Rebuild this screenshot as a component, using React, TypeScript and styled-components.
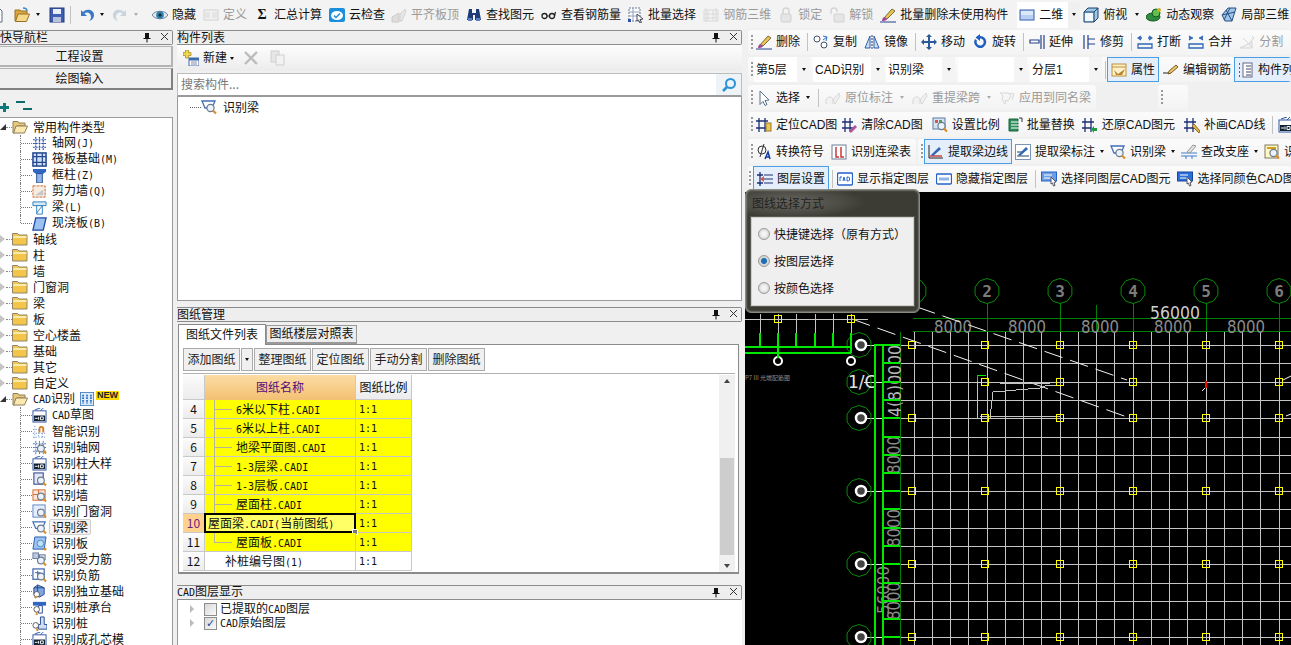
import React from 'react';
import styled, { createGlobalStyle, css } from 'styled-components';

const UI = '"Liberation Sans","Noto Sans CJK SC",sans-serif';
const CJK = '"Noto Sans CJK SC","Liberation Sans",sans-serif';

const Global = createGlobalStyle`
  html, body { margin: 0; padding: 0; background: #f0f0f0; overflow: hidden; }
  body { font: 12px/16px ${UI}; color: #111; }
`;

/* ---------- icons ---------- */
const Mag = () => (
  <>
    <circle cx="9.5" cy="9" r="3.6" fill="#eaf2fb" stroke="#6a7a8c" strokeWidth="1.2" />
    <path d="M12 11.5l3 3" stroke="#d98e2b" strokeWidth="2.2" />
  </>
);
const CadBadge = () => (
  <>
    <rect x="1" y="3" width="14" height="12" fill="#fff" stroke="#2f55a4" />
    <path d="M3 2l6-2M9 3l3-3" stroke="#2f55a4" />
    <rect x="2" y="8" width="12" height="6" fill="#123" />
    <path d="M3 11h3M7 9.5v3M9 9.5h3v3H9z" stroke="#fff" fill="none" />
  </>
);
const icons: Record<string, React.ReactNode> = {
  doc: <path d="M3 1h8l3 3v11H3z" fill="#fff" stroke="#5a6a80" />,
  open: (
    <>
      <path d="M1 3h5l1 1h6v4H5l-2 6H1z" fill="#d9a73f" stroke="#96702a" />
      <path d="M4 7h11.5l-3 7.5H1.5z" fill="#f6d988" stroke="#96702a" />
      <path d="M9 1c3 0 4 1 4 3" stroke="#3a8ac8" fill="none" strokeWidth="1.4" />
    </>
  ),
  folder: (
    <>
      <path d="M.5 2.5h5l1.500 1.500h8v10H.5z" fill="#f3c64b" stroke="#8e8468" />
      <path d="M1.500 5h13v2h-13z" fill="#fbeaa9" />
    </>
  ),
  folderOpen: (
    <>
      <path d="M1 2.500h5l1 1.500h6v3H5l-2 7H1z" fill="#e9c878" stroke="#8e7f5c" />
      <path d="M4 7h11.500l-3 7H1.500z" fill="#fbe8b0" stroke="#8e7f5c" />
    </>
  ),
  save: (
    <>
      <rect x="1" y="1" width="14" height="14" fill="#3f5fb5" stroke="#24397a" />
      <rect x="4" y="2" width="8" height="5" fill="#e8eefb" />
      <rect x="4" y="10" width="8" height="5" fill="#b7c3dd" />
    </>
  ),
  undo: <path d="M2 3v6h6L5.500 6.500C8 4.500 12 6 12 10c0 2-1 3-2 4 4-1 5-4 5-6C15 3 8 1 4 5z" fill="#3b78c8" />,
  redo: <path d="M14 3v6H8l2.500-2.500C8 4.500 4 6 4 10c0 2 1 3 2 4-4-1-5-4-5-6C1 3 8 1 12 5z" fill="#c8d4dc" />,
  eye: (
    <>
      <path d="M0 8c3-5 13-5 16 0-3 5-13 5-16 0z" fill="#dfe8f1" stroke="#6f8398" />
      <circle cx="8" cy="8" r="3.800" fill="#2f7ea8" />
      <circle cx="8" cy="8" r="1.600" fill="#0d2b3d" />
    </>
  ),
  define: (
    <>
      <rect x="1" y="3" width="14" height="10" fill="#f2f2f2" stroke="#bbb" />
      <path d="M2 6h5M2 8h5M2 10h5M9 6h5M9 8h5M9 10h5" stroke="#c4c4c4" />
    </>
  ),
  cloud: (
    <>
      <rect x="0" y="1" width="16" height="14" rx="2" fill="#1b8fdc" />
      <ellipse cx="8" cy="8.500" rx="6" ry="4.500" fill="#fff" />
      <path d="M5 8.500l2 2 4-4" stroke="#1b8fdc" strokeWidth="1.500" fill="none" />
    </>
  ),
  flush: (
    <>
      <path d="M1 10l7-4v9H1z" fill="#cfcfcf" stroke="#b0b0b0" />
      <path d="M9 14V7l5-5 1 2-4 10z" fill="#dedede" stroke="#bcbcbc" />
    </>
  ),
  binoc: (
    <>
      <path d="M3 2h3v4h4V2h3l2 11h-6V8H7v5H1z" fill="#1f3a78" />
      <rect x="2" y="11" width="4" height="3" fill="#5d7ec0" />
      <rect x="10" y="11" width="4" height="3" fill="#5d7ec0" />
    </>
  ),
  glasses: (
    <>
      <circle cx="3.500" cy="9" r="2.500" fill="none" stroke="#222" strokeWidth="1.300" />
      <circle cx="11" cy="9" r="2.500" fill="none" stroke="#222" strokeWidth="1.300" />
      <path d="M6 9h2.500M13.500 9l1-4" stroke="#222" strokeWidth="1.200" />
    </>
  ),
  batch: (
    <>
      <path d="M1 1h11v13H1z" fill="#fff" stroke="#6a7a96" strokeDasharray="2 1" />
      <path d="M1 5h11M1 9h11M5 1v13" stroke="#8fa2bf" />
      <rect x="0" y="12" width="3" height="3" fill="#2b4fb0" />
      <path d="M9 7l6 5-3 .500 1.500 3-1.500.500-1.500-3L9 14z" fill="#fff" stroke="#445" />
    </>
  ),
  rebar3d: <path d="M1 3h14v11H1zM5 3v11M10 3v11M1 7h14M1 11h14M3 1v14M13 1v14" fill="none" stroke="#c4c8cc" />,
  lock: (
    <>
      <path d="M5 7V4a3 3 0 0 1 6 0v3" fill="none" stroke="#c0c0c0" strokeWidth="1.500" />
      <rect x="3" y="7" width="10" height="8" rx="1" fill="#dcdcdc" stroke="#bbb" />
    </>
  ),
  unlock: (
    <>
      <path d="M2 7V4a3 3 0 0 1 6 0v1" fill="none" stroke="#c0c0c0" strokeWidth="1.500" />
      <rect x="5" y="7" width="10" height="8" rx="1" fill="#dcdcdc" stroke="#bbb" />
    </>
  ),
  brush: (
    <>
      <path d="M4 11l8-9 3 2-8 8z" fill="#e9c34f" stroke="#7a6c3a" />
      <path d="M2 14c0-2 1-4 3-4l2 2c-1 2-3 2-5 2z" fill="#a04a9a" />
      <path d="M0 15h16" stroke="#27408b" />
    </>
  ),
  copy: (
    <>
      <circle cx="4" cy="5" r="3" fill="#fff" stroke="#3f5168" />
      <circle cx="11" cy="11" r="3" fill="#fff" stroke="#3f5168" />
      <path d="M10 2l4 1-1 4M14 3l-4 3" stroke="#2f6ec2" fill="none" />
    </>
  ),
  mirror: (
    <>
      <path d="M1 14L6 2v12z" fill="#cfe0f6" stroke="#2a5fb0" />
      <path d="M15 14L10 2v12z" fill="#cfe0f6" stroke="#2a5fb0" />
      <path d="M8 1v14" stroke="#334" strokeDasharray="2 1" />
    </>
  ),
  move: <path d="M8 0l3 3H9v4h4V5l3 3-3 3V9H9v4h2l-3 3-3-3h2V9H3v2L0 8l3-3v2h4V3H5z" fill="#2a5a98" />,
  rotate: <path d="M8 2a6 6 0 1 1-5 3l2 1.500A3.500 3.500 0 1 0 8 4.500V7L3.500 3.500 8 0z" fill="#1f5fc4" />,
  extend: <path d="M1 6h9v3H1zM12 1v14M15 1v14" fill="#fff" stroke="#24408a" strokeWidth="1.200" />,
  trim: <path d="M4 1v14M8 1v14M8 5h7M8 10h7" fill="none" stroke="#24408a" strokeWidth="1.200" />,
  breakp: <path d="M1 10h14v4H1zM4 2l-3 2 3 2M12 2l3 2-3 2M1 4h4M11 4h4" fill="none" stroke="#2f68b8" strokeWidth="1.300" />,
  merge: <path d="M1 10h14v4H1zM1 2l3 2-3 2M15 2l-3 2 3 2M1 4h4M11 4h4" fill="none" stroke="#2f68b8" strokeWidth="1.300" />,
  split: <path d="M1 14h12V8L1 14zM4 4l9 9M13 2l2 2-5 6" fill="#eee" stroke="#c0c0c0" />,
  attr: (
    <>
      <rect x="1" y="2" width="14" height="12" fill="#fff1c9" stroke="#c18f36" />
      <path d="M1 5h14" stroke="#c18f36" />
      <path d="M3 8l4 4 7-5-3 6H5z" fill="#b5852d" />
    </>
  ),
  pencil: (
    <>
      <path d="M0 11h8" stroke="#222" />
      <path d="M6 9l7-6 2 2-7 6-3 1z" fill="#e8c566" stroke="#7a5b22" />
    </>
  ),
  list: (
    <>
      <path d="M1 2h2M1 6h2M1 10h2M1 14h2" stroke="#333" strokeWidth="1.600" strokeDasharray="1 1" />
      <rect x="5" y="1" width="9" height="14" fill="#fff" stroke="#668" />
      <path d="M8 4h5M8 7h5M8 10h5M8 13h5" stroke="#446" />
    </>
  ),
  listBlue: (
    <>
      <rect x=".5" y=".5" width="15" height="15" fill="#dcebfa" stroke="#4a7fc0" />
      <path d="M3.500 3v10M8 3v10M12.500 3v10" stroke="#2c6cc4" strokeWidth="2" strokeDasharray="2 1" />
    </>
  ),
  cursor: <path d="M4 1l9 9-4 .500 2 4-2 1-2-4-3 3z" fill="#fff" stroke="#5b6f8a" />,
  span: <path d="M1 14v-4c0-2 2-3 4-3s3 1 3 3v4M8 10l6-7 1 3-5 8z" fill="#eee" stroke="#c2c2c2" />,
  apply: <path d="M1 3h8l3 3-3 5-2-1-1 4-3-5 1-3zM10 3l5 1-2 6" fill="#f4f4f4" stroke="#c2c2c2" />,
  locate: (
    <>
      <path d="M3 1v14M9 1v14M0 4h12M0 11h12" stroke="#1d2f73" strokeWidth="1.300" />
      <rect x="10" y="6" width="5" height="8" fill="#e9c55a" stroke="#9a7a26" />
    </>
  ),
  clearCad: (
    <>
      <path d="M4 1v14M9 1v14M1 5h11M1 11h11" stroke="#1d2f73" strokeWidth="1.300" />
      <path d="M8 14l6-6 2 2-6 6z" fill="#b0559c" />
    </>
  ),
  scale: (
    <>
      <rect x="1" y="1" width="12" height="11" fill="#d6e3f3" stroke="#5a7ba5" />
      <path d="M3 3h3v3H3z" fill="#d9534f" />
      <path d="M7 3h3v3H7z" fill="#55a24f" />
      <Mag />
    </>
  ),
  replace: (
    <>
      <path d="M2 2h9v12H2z" fill="#2f8f5a" stroke="#186239" />
      <path d="M4 5h8M4 8h8M4 11h8" stroke="#fff" />
      <path d="M12 1h3v4" fill="none" stroke="#333" />
    </>
  ),
  restore: (
    <>
      <path d="M3 1v14M9 1v14M0 5h12M0 11h9" stroke="#1d2f73" strokeWidth="1.300" />
      <path d="M9 12l3-3v2h3v3h-3v2z" fill="#1e9a3f" />
    </>
  ),
  patch: (
    <>
      <path d="M3 1v14M9 1v14M0 5h12M0 11h10" stroke="#1d2f73" strokeWidth="1.300" />
      <path d="M8 9l2-2 6 7-1 2z" fill="#e7b24b" stroke="#8b6a25" />
    </>
  ),
  phiA: (
    <>
      <circle cx="6" cy="6" r="4" fill="none" stroke="#333" />
      <path d="M8 0L4 13" stroke="#333" />
      <path d="M9 15l3-7 2 7M10 13h3.500" fill="none" stroke="#123a9a" strokeWidth="1.500" />
    </>
  ),
  liang: (
    <>
      <rect x="1" y="1" width="14" height="14" fill="#fff" stroke="#6f7f9a" />
      <path d="M5 3v10h3M10 3v10h3" stroke="#c8373a" strokeWidth="1.500" fill="none" />
    </>
  ),
  edgeLine: (
    <>
      <path d="M1 1v13h14" fill="none" stroke="#222" />
      <path d="M2 12h12" stroke="#c44" strokeWidth="1.400" />
      <path d="M3 11l8-8 2 2-8 7z" fill="#3265b8" />
    </>
  ),
  markLine: (
    <>
      <rect x=".5" y=".5" width="15" height="15" fill="#fff" stroke="#7b93b5" />
      <path d="M2 12h12M2 8h6" stroke="#246" />
      <path d="M3 11l8-8 2 2-8 7z" fill="#3265b8" />
    </>
  ),
  findBeam: (
    <>
      <path d="M1 2h13l-3 7H4z" fill="#fff" stroke="#3f6fb8" strokeWidth="1.300" />
      <Mag />
    </>
  ),
  support: (
    <>
      <path d="M0 9h16M0 12h16" stroke="#3d7fd0" />
      <path d="M5 15v-3M11 15v-3" stroke="#3d7fd0" />
      <path d="M6 8l6-7 3 1-6 7z" fill="#e2e2e2" stroke="#999" />
    </>
  ),
  report: (
    <>
      <rect x="1" y="1" width="13" height="13" fill="#fff6c8" stroke="#7e7a5a" />
      <path d="M3 4h9" stroke="#d2a21f" strokeWidth="2" />
      <Mag />
    </>
  ),
  layers: (
    <>
      <path d="M3 1v14M0 4h6M0 12h6" stroke="#1d2f73" strokeWidth="1.300" />
      <path d="M7 4h9M7 8h9M7 12h9" stroke="#1d2f73" />
      <path d="M3 8l4-3v6z" fill="#d9534f" />
    </>
  ),
  cadShow: (
    <>
      <rect x=".5" y="2" width="15" height="12" rx="1" fill="#fff" stroke="#2562c9" strokeWidth="1.300" />
      <path d="M3 10V6h2M6 10l1-4 1 4M10 6v4h1.500l1-1V7l-1-1z" stroke="#2562c9" fill="none" />
    </>
  ),
  cadHide: (
    <>
      <rect x=".5" y="3" width="15" height="10" rx="1" fill="#fff" stroke="#2562c9" strokeWidth="1.300" />
      <path d="M3 6.500h10v3H3z" fill="#8fb4e8" />
    </>
  ),
  cadPick: (
    <>
      <rect x=".5" y="1" width="15" height="9" fill="#6f9fe2" stroke="#2562c9" />
      <path d="M3 4h8M3 7h8" stroke="#fff" />
      <path d="M10 6l5 5-2 .500 1 3-1.500.500-1-3-1.500 1z" fill="#fff" stroke="#556" />
    </>
  ),
  cadPick2: (
    <>
      <rect x=".5" y="1" width="15" height="9" fill="#2d6fd8" stroke="#18479b" />
      <path d="M3 4h8M3 7h8" stroke="#fff" />
      <path d="M10 6l5 5-2 .500 1 3-1.500.500-1-3-1.500 1z" fill="#fff" stroke="#556" />
    </>
  ),
  view2d: (
    <>
      <rect x="1" y="3" width="14" height="10" fill="#b8cff2" stroke="#355fb0" />
      <path d="M2 4h12v4H2z" fill="#dbe7fa" />
    </>
  ),
  topview: (
    <>
      <path d="M1 5l4-4h10v10l-4 4H1z" fill="#9bc8e4" stroke="#1f3f6a" />
      <path d="M1 5h10v10M11 5l4-4" fill="none" stroke="#1f3f6a" />
      <path d="M2 6h8v8H2z" fill="#f2f7fb" />
    </>
  ),
  orbit: (
    <>
      <ellipse cx="7" cy="10" rx="7" ry="4" fill="#2b8d3d" stroke="#14561f" />
      <circle cx="10" cy="6" r="4" fill="#5fbf4c" stroke="#14561f" />
      <circle cx="13" cy="3" r="2" fill="#c6b52a" />
    </>
  ),
  local3d: (
    <>
      <path d="M1 8l6-7h8l-4 13H4z" fill="#9fc4ea" stroke="#294f82" />
      <path d="M5 3l6 11M9 1l-6 12M1 8l13-3" stroke="#294f82" />
    </>
  ),
  plusNew: (
    <>
      <rect x="6" y="8" width="10" height="8" fill="#fff" stroke="#3d6bb0" />
      <rect x="6" y="8" width="10" height="2.500" fill="#3d6bb0" />
      <path d="M8 12h6M8 14h6" stroke="#88a" />
      <path d="M2.500 0h3v2.500H8v3H5.500V8h-3V5.500H0v-3h2.500z" fill="#f1d54a" stroke="#9b8422" strokeWidth=".7" />
    </>
  ),
  xGray: <path d="M2 2l12 12M14 2L2 14" stroke="#bcbcbc" strokeWidth="2.400" />,
  paste: (
    <>
      <rect x="1" y="1" width="8" height="11" fill="#e6e6e6" stroke="#cfcfcf" />
      <rect x="6" y="5" width="8" height="10" fill="#f2f2f2" stroke="#cfcfcf" />
    </>
  ),
  search: (
    <>
      <circle cx="9.500" cy="6.500" r="4.500" fill="none" stroke="#2a94d8" strokeWidth="2" />
      <path d="M6 10l-4 4" stroke="#2a94d8" strokeWidth="2.600" />
    </>
  ),
  axisNet: <path d="M1 4h14M1 8h14M1 12h14M4 1v14M8 1v14M12 1v14" stroke="#2b4fa8" strokeDasharray="2 1" fill="none" strokeWidth="1.300" />,
  raft: (
    <>
      <rect x="1" y="1" width="14" height="14" fill="#cfe0f6" stroke="#24478e" strokeWidth="1.600" />
      <path d="M1 5h14M1 11h14M5 1v14M11 1v14" stroke="#24478e" strokeWidth="1.300" />
    </>
  ),
  column: (
    <>
      <path d="M1 1h14v3l-3 2H4L1 4z" fill="#2f66c4" />
      <rect x="5" y="6" width="6" height="10" fill="#8fb5ec" stroke="#24478e" />
    </>
  ),
  wall: (
    <>
      <rect x="1" y="2" width="13" height="12" fill="#f6ece2" stroke="#c86a30" strokeDasharray="3 1" />
      <path d="M3 12l9-6v6z" fill="#c8c8c8" />
    </>
  ),
  beam: (
    <>
      <path d="M1 2h14v4H1z" fill="#d5ecf7" stroke="#2b7dbd" />
      <path d="M5 6h6v9H5z" fill="#fff" stroke="#2b7dbd" />
      <path d="M5 14l6-8" stroke="#2b7dbd" />
    </>
  ),
  slab: <path d="M4 2h11l-3 13H1z" fill="#9cc0f0" stroke="#1d4aa8" strokeWidth="1.400" />,
  cad: <CadBadge />,
  smart: (
    <>
      <path d="M1 6h8M1 10h14M1 14h14M3 2v13M7 6v9M11 10v5" stroke="#4a7cc2" strokeDasharray="1 2" />
      <path d="M7 9V5a3 3 0 0 1 6 0v4h-2V5a1 1 0 0 0-2 0v4z" fill="#d97820" />
    </>
  ),
  axisFind: (
    <>
      <path d="M1 4h14M1 8h14M1 12h14M4 1v14M8 1v14M12 1v14" stroke="#4a6fb0" strokeDasharray="2 1" />
      <Mag />
    </>
  ),
  colFind: (
    <>
      <rect x="2" y="1" width="10" height="12" fill="#e4e8f4" stroke="#4a5ea0" strokeWidth="1.300" />
      <Mag />
    </>
  ),
  wallFind: (
    <>
      <rect x="1" y="2" width="13" height="11" fill="#fbe6d6" stroke="#d06a30" />
      <path d="M1 7h13M7 2v11" stroke="#d06a30" />
      <Mag />
    </>
  ),
  doorFind: (
    <>
      <rect x="1" y="1" width="13" height="13" fill="#e6eefb" stroke="#5a84c4" />
      <Mag />
    </>
  ),
  slabFind: (
    <>
      <path d="M3 1h12l-2 13H1z" fill="#9cc0f0" stroke="#2460b0" />
      <circle cx="9" cy="8" r="3.500" fill="#bfe0f4" stroke="#4a8fc8" />
      <circle cx="14" cy="14" r="1.500" fill="#d98e2b" />
    </>
  ),
  rebarFind: (
    <>
      <rect x="1" y="1" width="6" height="6" fill="#bccbe3" stroke="#64779c" />
      <rect x="8" y="3" width="6" height="5" fill="#d9e1ee" stroke="#64779c" />
      <Mag />
    </>
  ),
  negFind: (
    <>
      <rect x="1" y="1" width="12" height="11" fill="#fff" stroke="#3f64ad" strokeWidth="1.300" />
      <path d="M3 5h6M6 3v6" stroke="#3f64ad" />
      <Mag />
    </>
  ),
  footFind: (
    <>
      <path d="M6 1l7 3v7l-5 3-6-3V4z" fill="#7fa6e0" stroke="#24478e" />
      <path d="M6 1v13M2 4l11 0" stroke="#24478e" />
      <circle cx="5" cy="11" r="3" fill="#fff" stroke="#556" />
      <path d="M3 15l2-2" stroke="#d98e2b" strokeWidth="2" />
    </>
  ),
  capFind: (
    <>
      <path d="M1 2h14v4H1z" fill="#2f66c4" />
      <path d="M7 6h4v8H7z" fill="#fff" stroke="#24478e" />
      <circle cx="5" cy="10" r="3" fill="#fff" stroke="#556" />
      <path d="M5 13v3" stroke="#d98e2b" strokeWidth="2" />
    </>
  ),
  pileFind: (
    <>
      <path d="M9 1h4v8h3v5H7V9h2z" fill="#cfe0f6" stroke="#24478e" />
      <circle cx="4" cy="10" r="3" fill="#fff" stroke="#556" />
      <path d="M5 13l1 3" stroke="#d98e2b" strokeWidth="2" />
    </>
  ),
};

const Svg = styled.svg<{ $off?: boolean; $w: number }>`
  flex: none;
  width: ${p => p.$w}px;
  height: ${p => p.$w}px;
  ${p => p.$off && css`filter: grayscale(1) opacity(0.6);`}
`;
const Icon = ({ n, off, size = 16 }: { n: string; off?: boolean; size?: number }) => (
  <Svg viewBox="0 0 16 16" $w={size} $off={off}>{icons[n]}</Svg>
);

/* ---------- mixed text: Latin runs are half-width, as in a bitmap song face ---------- */
const Latin = styled.span`
  font-family: "DejaVu Sans Mono", monospace;
  font-size: 10px;
`;
const mix = (t: string) => (
  <span>{t.split(/([\x21-\x7e]+)/).map((s, i) => (i % 2 ? <Latin key={i}>{s}</Latin> : s))}</span>
);

/* ---------- page ---------- */
const Shell = styled.div`
  width: 1291px;
  height: 645px;
  display: flex;
  flex-direction: column;
  overflow: hidden;
  position: relative;
`;
const TopBar = styled.div`
  flex: none;
  height: 29px;
  display: flex;
  align-items: center;
  white-space: nowrap;
  overflow: hidden;
  background: #f3f3f3;
`;
const Tool = styled.span<{ $ml?: number; $off?: boolean }>`
  flex: none;
  display: inline-flex;
  align-items: center;
  gap: 4px;
  margin-left: ${p => p.$ml ?? 7}px;
  color: ${p => (p.$off ? '#9a9a9a' : '#111')};
  font-family: ${UI};
  font-size: 12px;
  line-height: 16px;
  white-space: nowrap;
`;
const HiTool = styled(Tool)`
  height: 23px;
  padding: 0 3px;
  border: 1px solid #4a9ee6;
  background: #e4effb;
`;
const Caret = styled.i<{ $ml?: number; $off?: boolean }>`
  flex: none;
  width: 0;
  height: 0;
  margin-left: ${p => p.$ml ?? 5}px;
  border: 2.5px solid transparent;
  border-top: 3px solid ${p => (p.$off ? '#aaa' : '#111')};
  border-bottom: 0;
`;
const Sep = styled.i<{ $ml?: number; $mr?: number }>`
  flex: none;
  width: 1px;
  height: 18px;
  background: #c2c2c2;
  margin: 0 ${p => p.$mr ?? -2}px 0 ${p => p.$ml ?? 7}px;
`;
const Sigma = styled.b`
  flex: none;
  width: 16px;
  text-align: center;
  font: bold 14px/16px "Liberation Serif", serif;
`;
const ViewChip = styled.span`
  flex: none;
  display: inline-flex;
  align-items: center;
  height: 26px;
  width: 62px;
  margin-left: 9px;
  padding-left: 1px;
  box-sizing: border-box;
  background: #fff;
`;
const CaretBox = styled.span`
  flex: none;
  align-self: stretch;
  width: 12px;
  margin-left: 5px;
  background: #f0f0f0;
  display: flex;
  align-items: center;
  justify-content: center;
`;

const Body = styled.div`
  flex: 1;
  min-height: 0;
  display: flex;
`;

/* panels */
const NavCol = styled.div`
  flex: none;
  width: 173px;
  display: flex;
  flex-direction: column;
  overflow: hidden;
`;
const MidCol = styled.div`
  flex: none;
  width: 565px;
  margin-left: 4px;
  display: flex;
  flex-direction: column;
`;
const RightCol = styled.div`
  flex: none;
  width: 546px;
  margin-left: 3px;
  display: flex;
  flex-direction: column;
  min-height: 0;
`;
const TitleBar = styled.div`
  flex: none;
  height: 13px;
  margin-top: 1px;
  display: flex;
  align-items: center;
  border-top: 1px solid #8c8c8c;
  border-bottom: 1px solid #8c8c8c;
  border-right: 1px solid #8c8c8c;
  border-radius: 0 2px 2px 0;
  background: #eeeeee;
  font: 12px/13px ${CJK};
  overflow: visible;
`;
const TitleText = styled.span`
  flex: 1;
  white-space: nowrap;
  padding-bottom: 2px;
`;
const PinBox = styled.span`
  display: flex;
  width: 30px;
  justify-content: space-between;
  padding: 0 3px 0 0;
  box-sizing: border-box;
`;
const PanelHead = ({ title }: { title: string }) => (
  <TitleBar>
    <TitleText>{mix(title)}</TitleText>
    <PinBox>
      <svg width="10" height="11" viewBox="0 0 10 11">
        <path d="M3 1h4v5h1.500v1H5.500v3.500h-1V7h-3V6H3z" fill="#111" />
      </svg>
      <svg width="9" height="9" viewBox="0 0 9 9">
        <path d="M1 1l7 7M8 1L1 8" stroke="#333" />
      </svg>
    </PinBox>
  </TitleBar>
);

const NavButton = styled.div<{ $raised?: boolean }>`
  flex: none;
  box-sizing: border-box;
  height: ${p => (p.$raised ? 22 : 21)}px;
  margin-top: 1px;
  margin-left: -13px;
  display: flex;
  align-items: center;
  justify-content: center;
  padding-bottom: 1px;
  font: 12px/16px ${CJK};
  background: #f0f0f0;
  border: 1px solid #b4b4b4;
  border-bottom: 2px solid ${p => (p.$raised ? '#808080' : '#b4b4b4')};
  border-right: 2px solid ${p => (p.$raised ? '#808080' : '#b4b4b4')};
`;
const ExpandRow = styled.div`
  flex: none;
  height: 27px;
  display: flex;
  align-items: flex-end;
  gap: 7px;
  padding-bottom: 5px;
  box-sizing: border-box;
`;
const TreeBox = styled.div`
  flex: 1;
  min-height: 0;
  background: #fff;
  border-top: 1px solid #9a9a9a;
  border-right: 1px solid #9a9a9a;
  padding-top: 1px;
  overflow: hidden;
  font: 12px/16px ${CJK};
`;
const GroupRow = styled.div`
  height: 16px;
  display: flex;
  align-items: center;
  position: relative;
  padding-left: 12px;
  gap: 5px;
  white-space: nowrap;
  &::after {
    content: '';
    position: absolute;
    left: 6px;
    top: 8px;
    width: 6px;
    border-top: 1px dotted #888;
  }
`;
const Twist = styled.i<{ $open?: boolean }>`
  position: absolute;
  left: 0;
  top: 4px;
  width: 0;
  height: 0;
  border-style: solid;
  ${p =>
    p.$open
      ? css`
          border-width: 0 0 6px 6px;
          border-color: transparent transparent #333 transparent;
          top: 5px;
        `
      : css`
          border-width: 4px 0 4px 5px;
          border-color: transparent transparent transparent #c4c4c4;
        `}
`;
const ChildRow = styled.div<{ $last?: boolean }>`
  height: 16px;
  display: flex;
  align-items: center;
  position: relative;
  padding-left: 32px;
  gap: 3px;
  white-space: nowrap;
  &::before {
    content: '';
    position: absolute;
    left: 20px;
    top: 0;
    height: ${p => (p.$last ? 8 : 16)}px;
    border-left: 1px dotted #777;
  }
  &::after {
    content: '';
    position: absolute;
    left: 21px;
    top: 8px;
    width: 11px;
    border-top: 1px dotted #777;
  }
`;
const ChildLabel = styled.span<{ $sel?: boolean }>`
  padding: 0 2px;
  ${p =>
    p.$sel &&
    css`
      background: #f3f3f3;
      border: 1px solid #cfcfcf;
      border-radius: 2px;
      margin: 0 -1px;
      line-height: 14px;
    `}
`;
const NewBadge = styled.span`
  position: absolute;
  left: 96px;
  top: 0;
  height: 9px;
  padding: 0 1px;
  background: #ffd800;
  color: #222;
  font: bold 9px/9px "Liberation Sans", sans-serif;
`;

/* component list */
const ListPanel = styled.div`
  flex: none;
  height: 272px;
  display: flex;
  flex-direction: column;
`;
const ListBar = styled.div`
  flex: none;
  height: 26px;
  display: flex;
  align-items: center;
  padding-left: 6px;
  background: linear-gradient(#fdfdfd, #ececec);
`;
const SearchBox = styled.div`
  flex: none;
  height: 24px;
  margin-top: 2px;
  box-sizing: border-box;
  display: flex;
  align-items: center;
  border: 1px solid #bdbdbd;
  border-bottom: 2px solid #9a9a9a;
  background: #fff;
`;
const SearchText = styled.span`
  flex: 1;
  padding: 0 0 2px 3px;
  color: #777;
  font: 12px/16px ${CJK};
`;
const SearchBtn = styled.span`
  flex: none;
  align-self: stretch;
  width: 25px;
  background: #eef3f8;
  display: flex;
  align-items: center;
  justify-content: center;
`;
const ListTree = styled.div`
  flex: 1;
  min-height: 0;
  background: #fff;
  border: 1px solid #9a9a9a;
  border-top: 0;
  padding: 2px 0 0 12px;
  display: flex;
  align-items: center;
  align-content: flex-start;
  gap: 6px;
  flex-wrap: wrap;
  font: 12px/16px ${CJK};
`;
const Dots = styled.i`
  width: 11px;
  border-top: 1px dotted #666;
  margin-right: -6px;
`;

/* drawing manager */
const DrawPanel = styled.div`
  flex: none;
  margin-top: 5px;
  height: 268px;
  display: flex;
  flex-direction: column;
`;
const Tabs = styled.div`
  flex: none;
  height: 21px;
  margin: 1px 0 0 1px;
  display: flex;
  align-items: flex-end;
`;
const Tab = styled.span<{ $on?: boolean }>`
  box-sizing: border-box;
  height: ${p => (p.$on ? 21 : 19)}px;
  width: ${p => (p.$on ? 88 : 91)}px;
  display: flex;
  align-items: center;
  justify-content: center;
  padding-bottom: 2px;
  background: ${p => (p.$on ? '#fff' : '#ececec')};
  border: 1px solid ${p => (p.$on ? '#8a8a8a' : '#9a9a9a')};
  border-bottom: ${p => (p.$on ? '0' : '2px solid #9a9a9a')};
  font: 12px/16px ${CJK};
  margin-bottom: ${p => (p.$on ? -1 : 0)}px;
  position: relative;
`;
const TabBody = styled.div`
  flex: 1;
  min-height: 0;
  margin-left: 1px;
  width: 561px;
  box-sizing: border-box;
  background: #fff;
  border: 1px solid #8a8a8a;
  border-bottom: 2px solid #8a8a8a;
  padding: 3px 3px 0 4px;
  display: flex;
  flex-direction: column;
`;
const BtnRow = styled.div`
  flex: none;
  height: 24px;
  display: flex;
  gap: 1px;
  border-bottom: 1px solid #b0b0b0;
  padding-bottom: 1px;
`;
const GrayBtn = styled.span<{ $w: number }>`
  box-sizing: border-box;
  width: ${p => p.$w}px;
  height: 23px;
  display: flex;
  align-items: center;
  justify-content: center;
  padding-bottom: 1px;
  background: #f0f0f0;
  border: 1px solid #aaa;
  font: 12px/16px ${CJK};
  color: #222;
`;
const GridWrap = styled.div`
  flex: 1;
  min-height: 0;
  display: flex;
  padding-top: 1px;
`;
const Sheet = styled.div`
  flex: 1;
  font: 12px/16px ${CJK};
`;
const SheetRow = styled.div<{ $h?: number }>`
  display: flex;
  height: ${p => p.$h ?? 19}px;
`;
const HeadCell = styled.span<{ $sel?: boolean }>`
  flex: none;
  box-sizing: border-box;
  width: 22px;
  display: flex;
  align-items: center;
  justify-content: center;
  background: ${p => (p.$sel ? '#ffd18f' : 'linear-gradient(#fbfbfb,#ececec)')};
  color: ${p => (p.$sel ? '#702080' : '#111')};
  border-right: 1px solid #c8c8c8;
  border-bottom: 1px solid #c8c8c8;
`;
const NameHead = styled.span`
  flex: none;
  box-sizing: border-box;
  width: 151px;
  display: flex;
  align-items: center;
  justify-content: center;
  padding-bottom: 1px;
  color: #5a0a78;
  background: linear-gradient(#fbdca4, #f3c072);
  border-right: 1px solid #c8c8c8;
`;
const RatioHead = styled.span`
  flex: none;
  box-sizing: border-box;
  width: 56px;
  display: flex;
  align-items: center;
  justify-content: center;
  padding-bottom: 1px;
  background: linear-gradient(#fbfbfb, #ececec);
  border-right: 1px solid #c8c8c8;
  border-bottom: 1px solid #c8c8c8;
`;
const NameCell = styled.span<{ $bg: string; $pad: number }>`
  flex: none;
  box-sizing: border-box;
  width: 151px;
  display: flex;
  align-items: center;
  position: relative;
  padding: 1px 0 0 ${p => p.$pad}px;
  background: ${p => p.$bg};
  border-right: 1px solid #c8c8c8;
  border-bottom: 1px solid #c8c8c8;
  white-space: nowrap;
`;
const Guide = styled.i<{ $last?: boolean }>`
  position: absolute;
  left: 9px;
  top: 0;
  width: 17px;
  height: ${p => (p.$last ? 10 : 19)}px;
  border-left: 1px solid #b4b49a;
  &::after {
    content: '';
    position: absolute;
    left: 0;
    top: 9px;
    width: 17px;
    border-top: 1px solid #b4b49a;
  }
`;
const SelFrame = styled.i`
  position: absolute;
  left: -1px;
  right: -1px;
  top: -1px;
  bottom: -1px;
  border: 2px solid #000;
  &::after {
    content: '';
    position: absolute;
    right: -4px;
    bottom: -4px;
    width: 4px;
    height: 4px;
    background: #777;
    border: 1px solid #fff;
  }
`;
const CellText = styled.span`
  position: relative;
`;
const RatioCell = styled.span<{ $bg: string }>`
  flex: none;
  box-sizing: border-box;
  width: 56px;
  display: flex;
  align-items: center;
  padding: 1px 0 0 3px;
  background: ${p => p.$bg};
  border-right: 1px solid #c8c8c8;
  border-bottom: 1px solid #c8c8c8;
`;
const ScrollBar = styled.div`
  flex: none;
  width: 16px;
  height: 197px;
  background: #f0f0f0;
  display: flex;
  flex-direction: column;
  align-items: center;
  justify-content: space-between;
  position: relative;
  padding: 4px 0;
  box-sizing: border-box;
`;
const ScrollArrow = styled.i<{ $down?: boolean }>`
  width: 0;
  height: 0;
  border: 3px solid transparent;
  ${p => (p.$down ? css`border-top: 4px solid #444; border-bottom: 0;` : css`border-bottom: 4px solid #444; border-top: 0;`)}
`;
const Thumb = styled.i`
  position: absolute;
  left: 1px;
  right: 1px;
  top: 83px;
  height: 97px;
  background: #cdcdcd;
`;

/* layers */
const LayerPanel = styled.div`
  flex: 1;
  min-height: 0;
  margin-top: 10px;
  display: flex;
  flex-direction: column;
`;
const LayerTree = styled.div`
  flex: 1;
  background: #fff;
  border-left: 1px solid #9a9a9a;
  padding: 2px 0 0 12px;
  font: 12px/14px ${CJK};
`;
const LayerRow = styled.div`
  height: 14px;
  display: flex;
  align-items: center;
  gap: 3px;
  white-space: nowrap;
`;
const Arrow = styled.i`
  width: 0;
  height: 0;
  border-style: solid;
  border-width: 4px 0 4px 4px;
  border-color: transparent transparent transparent #bbb;
`;
const Check = styled.span<{ $on?: boolean }>`
  box-sizing: border-box;
  width: 13px;
  height: 13px;
  margin-left: 7px;
  border: 1px solid #8e8e8e;
  background: linear-gradient(135deg, #d8d8d8, #fafafa);
  color: #2a4a9a;
  font: bold 11px/11px "DejaVu Sans", sans-serif;
  text-align: center;
`;

/* right toolbars */
const Bars = styled.div`
  flex: none;
`;
const BarRow = styled.div<{ $h?: number }>`
  height: ${p => p.$h ?? 27}px;
  display: flex;
  align-items: center;
  gap: 2px;
  overflow: hidden;
`;
const Strip = styled.div<{ $w?: number; $ml?: number }>`
  flex: ${p => (p.$w ? 'none' : 1)};
  ${p => p.$w && `width: ${p.$w}px;`}
  margin-left: ${p => p.$ml ?? 3}px;
  min-width: 0;
  height: 25px;
  display: flex;
  align-items: center;
  overflow: hidden;
  white-space: nowrap;
  border-radius: 3px;
  background: linear-gradient(#fbfbfb, #f3f3f3);
`;
const Handle = styled.i<{ $ml?: number }>`
  flex: none;
  width: 2px;
  height: 15px;
  margin: 0 1px 0 ${p => p.$ml ?? 3}px;
  background: repeating-linear-gradient(#9a9a9a 0 2px, transparent 2px 4px);
`;
const Combo = styled.span<{ $w: number; $ml?: number }>`
  flex: none;
  box-sizing: border-box;
  width: ${p => p.$w}px;
  height: 25px;
  margin-left: ${p => p.$ml ?? 3}px;
  display: flex;
  align-items: center;
  padding-left: 2px;
  background: #fff;
  white-space: nowrap;
`;
const ComboText = styled.span`
  flex: 1;
`;
const ComboBtn = styled.span`
  flex: none;
  align-self: stretch;
  width: 13px;
  background: #f4f4f4;
  display: flex;
  align-items: center;
  justify-content: center;
`;

/* drawing canvas */
const Canvas = styled.div`
  flex: 1;
  min-height: 0;
  background: #000;
  position: relative;
  overflow: visible;
`;
const CadSvg = styled.svg`
  display: block;
  width: 546px;
  height: 453px;
`;
const Dialog = styled.div`
  position: absolute;
  left: 0;
  top: -3px;
  width: 175px;
  height: 124px;
  box-sizing: border-box;
  border: 1px solid #8a8a80;
  border-radius: 6px;
  padding: 0 4px 5px 4px;
  display: flex;
  flex-direction: column;
  background: radial-gradient(ellipse 75px 16px at 45px 12px, #66665f 0%, #4b4b43 70%, #3c3c34 100%);
  box-shadow: inset 0 0 2px #ddd;
`;
const DialogTitle = styled.div`
  flex: none;
  height: 26px;
  padding-left: 2px;
  display: flex;
  align-items: center;
  color: #232323;
  font: 12px/16px ${CJK};
`;
const DialogBody = styled.div`
  flex: 1;
  box-sizing: border-box;
  background: #efefef;
  border: 1px solid #5a5a55;
  outline: 1px solid #cfcfc8;
  outline-offset: -2px;
  padding: 3px 0 0 7px;
  display: flex;
  flex-direction: column;
  font: 12px/16px ${CJK};
`;
const RadioRow = styled.div`
  height: 27px;
  display: flex;
  align-items: center;
  gap: 4px;
  white-space: nowrap;
`;
const Radio = styled.i<{ $on?: boolean }>`
  flex: none;
  width: 12px;
  height: 12px;
  box-sizing: border-box;
  border: 1px solid #9a9a9a;
  border-radius: 50%;
  background: ${p =>
    p.$on
      ? 'radial-gradient(circle, #1a6fb5 0 2.5px, #d4d4d4 3.5px)'
      : 'radial-gradient(circle, #f4f4f4 0 2px, #cfcfcf 6px)'};
`;

/* ---------- data ---------- */
type T = { n: string; t?: string; ml?: number; off?: boolean };
const T = ({ n, t, ml, off }: T) => (
  <Tool $ml={ml} $off={off}>
    <Icon n={n} off={off} />
    {t}
  </Tool>
);

const commonKids: [string, string][] = [
  ['axisNet', '轴网(J)'],
  ['raft', '筏板基础(M)'],
  ['column', '框柱(Z)'],
  ['wall', '剪力墙(Q)'],
  ['beam', '梁(L)'],
  ['slab', '现浇板(B)'],
];
const groups = ['轴线', '柱', '墙', '门窗洞', '梁', '板', '空心楼盖', '基础', '其它', '自定义'];
const cadKids: [string, string][] = [
  ['cad', 'CAD草图'],
  ['smart', '智能识别'],
  ['axisFind', '识别轴网'],
  ['cad', '识别柱大样'],
  ['colFind', '识别柱'],
  ['wallFind', '识别墙'],
  ['doorFind', '识别门窗洞'],
  ['findBeam', '识别梁'],
  ['slabFind', '识别板'],
  ['rebarFind', '识别受力筋'],
  ['negFind', '识别负筋'],
  ['footFind', '识别独立基础'],
  ['capFind', '识别桩承台'],
  ['pileFind', '识别桩'],
  ['cad', '识别成孔芯模'],
];
const rows = [
  [4, '6米以下柱.CADI'],
  [5, '6米以上柱.CADI'],
  [6, '地梁平面图.CADI'],
  [7, '1-3层梁.CADI'],
  [8, '1-3层板.CADI'],
  [9, '屋面柱.CADI'],
  [10, '屋面梁.CADI(当前图纸)'],
  [11, '屋面板.CADI'],
  [12, '补桩编号图(1)'],
] as [number, string][];

/* ---------- CAD drawing ---------- */
const poly = (cx: number, cy: number, r: number) =>
  Array.from({ length: 10 }, (_, i) => {
    const a = (Math.PI * 2 * i) / 10 + Math.PI / 10;
    return `${(cx + r * Math.cos(a)).toFixed(1)},${(cy + r * Math.sin(a)).toFixed(1)}`;
  }).join(' ');
const hY = [345, 363, 382, 400, 418, 437, 455, 473, 491, 509, 528, 546, 564, 583, 601, 619, 637];
const mainY = [345, 382, 418, 491, 564, 637];
const vX = Array.from({ length: 21 }, (_, i) => 914 + i * 18.25);
const axX = [987, 1060, 1133, 1206, 1279];
const sqX = [912, 985, 1060, 1133, 1206, 1279];
const Cad = () => (
  <CadSvg viewBox="745 192 546 453" shapeRendering="crispEdges">
    {vX.map(x => (
      <line key={x} x1={x} x2={x} y1={331} y2={645} stroke="#c4c4c4" />
    ))}
    {hY.map(y => (
      <line key={y} x1={900} x2={1291} y1={y} y2={y} stroke="#c4c4c4" />
    ))}
    {mainY.map(y => (
      <line key={y} x1={864} x2={900} y1={y} y2={y} stroke="#e8e8e8" />
    ))}
    <g stroke="#008000" fill="none">
      <line x1={913} x2={1291} y1={318} y2={318} />
      <line x1={913} x2={1291} y1={331} y2={331} />
      <line x1={1096} x2={1096} y1={305} y2={331} />
      <line x1={900} x2={900} y1={332} y2={645} />
      {axX.map(x => (
        <line key={x} x1={x} x2={x} y1={303} y2={331} />
      ))}
    </g>
    <g shapeRendering="auto">
      {[914, ...axX].map(x => (
        <polygon key={x} points={poly(x, 291, 12.5)} fill="none" stroke="#0a8a0a" />
      ))}
      {axX.map((x, i) => (
        <text key={x} x={x} y={297} textAnchor="middle" fontFamily="DejaVu Sans Mono, monospace" fontSize="16" fontWeight="bold" fill="#7c7c7c">
          {i + 2}
        </text>
      ))}
      <text x={1175} y={319} textAnchor="middle" fontFamily="DejaVu Sans, sans-serif" fontSize="17" fill="#cfcfcf" textLength={50} lengthAdjust="spacingAndGlyphs">
        56000
      </text>
      {[953, 1027, 1100, 1173, 1246].map(x => (
        <text key={x} x={x} y={333} textAnchor="middle" fontFamily="DejaVu Sans, sans-serif" fontSize="17" fill="#8c8c8c" textLength={38} lengthAdjust="spacingAndGlyphs">
          8000
        </text>
      ))}
      {mainY.map(y => (
        <g key={y}>
          <polygon points={poly(859, y, 12.5)} fill="none" stroke="#0a8a0a" />
          {y !== 382 && <circle cx={861} cy={y} r={5} fill="#444" stroke="#fff" strokeWidth="2.5" />}
        </g>
      ))}
      <text x={848} y={388} fontFamily="DejaVu Sans, sans-serif" fontSize="17" fill="#e4e4e4">
        1/C
      </text>
      {/* dashed diagonals */}
      <path d="M917 307L1127 380M852 319L1127 417" stroke="#f2f2f2" strokeDasharray="19 8" fill="none" />
      <path d="M1283 380l8-4M1286 416l5-2" stroke="#f2f2f2" fill="none" />
      <path d="M1202 391l4-4" stroke="#fff" />
      <path d="M1206 381v7" stroke="#f00" strokeWidth="2" />
      {/* rotated dimensions */}
      {[455, 528, 601].map(y => (
        <text key={y} x={0} y={0} transform={`translate(900 ${y}) rotate(-90)`} textAnchor="middle" fontFamily="DejaVu Sans, sans-serif" fontSize="17" fill="#8c8c8c" textLength={38} lengthAdjust="spacingAndGlyphs">
          8000
        </text>
      ))}
      <text transform="translate(901 381) rotate(-90)" textAnchor="middle" fontFamily="DejaVu Sans, sans-serif" fontSize="17" fill="#b4b4b4" textLength={72} lengthAdjust="spacingAndGlyphs">
        4(8)0000
      </text>
      <text transform="translate(889 590) rotate(-90)" textAnchor="middle" fontFamily="DejaVu Sans, sans-serif" fontSize="15" fill="#8c8c8c" textLength={48} lengthAdjust="spacingAndGlyphs">
        56000
      </text>
      <circle cx={778} cy={361} r={4} fill="none" stroke="#fff" strokeWidth="2" />
      <circle cx={851} cy={361} r={4} fill="none" stroke="#fff" strokeWidth="2" />
      <text x={745} y={380} fontFamily="Noto Sans CJK SC, sans-serif" fontSize="6" fill="#8a8a8a">
        P7 III 光端配筋图
      </text>
    </g>
    {/* bright green */}
    <g stroke="#00e800" fill="none" strokeWidth="2">
      <line x1={875} x2={875} y1={344} y2={645} />
      <line x1={883} x2={883} y1={345} y2={645} />
      <line x1={875} x2={900} y1={345} y2={345} />
      {hY.slice(1).map(y => (
        <line key={y} x1={883} x2={900} y1={y} y2={y} />
      ))}
      <line x1={745} x2={851} y1={347} y2={347} />
      <line x1={745} x2={851} y1={353} y2={353} />
      <line x1={851} x2={851} y1={333} y2={353} />
      <line x1={778} x2={778} y1={333} y2={358} />
      {[760, 796, 815, 833].map(x => (
        <line key={x} x1={x} x2={x} y1={333} y2={347} />
      ))}
      <path d="M977 381v-6h9" strokeWidth="1" />
    </g>
    <g stroke="#c4c4c4" fill="none">
      <line x1={745} x2={868} y1={319} y2={319} />
      {[760, 778, 796, 815, 833, 851].map(x => (
        <line key={x} x1={x} x2={x} y1={314} y2={333} />
      ))}
      <path d="M977 381v37h83M987 387v31M993 392l-3 26M993 392l47-4 8-3h14M1000 383h50M980 416h80" />
    </g>
    {/* yellow grips */}
    <g stroke="#ffff00" fill="none">
      {mainY.flatMap(y =>
        sqX
          .filter(x => !(y === 382 && (x === 912 || x === 1206)))
          .map(x => <rect key={`${x}-${y}`} x={x - 3.5} y={y - 3.5} width={7} height={7} />),
      )}
      <rect x={774.500} y={315.500} width={7} height={7} />
      <rect x={847.500} y={315.500} width={7} height={7} />
    </g>
  </CadSvg>
);

export default function App() {
  return (
    <>
      <Global />
      <Shell>
        <TopBar>
          <T n="doc" ml={-12} />
          <T n="open" ml={10} />
          <Caret $ml={6} />
          <T n="save" ml={9} />
          <Sep $ml={5} $mr={0} />
          <T n="undo" ml={8} />
          <Caret $ml={5} />
          <T n="redo" ml={8} />
          <Caret $ml={6} $off />
          <T n="eye" t="隐藏" ml={14} />
          <T n="define" t="定义" off />
          <Tool>
            <Sigma>Σ</Sigma>汇总计算
          </Tool>
          <T n="cloud" t="云检查" />
          <T n="flush" t="平齐板顶" ml={6} off />
          <T n="binoc" t="查找图元" />
          <T n="glasses" t="查看钢筋量" />
          <T n="batch" t="批量选择" />
          <T n="rebar3d" t="钢筋三维" off />
          <T n="lock" t="锁定" off />
          <T n="unlock" t="解锁" off />
          <T n="brush" t="批量删除未使用构件" />
          <ViewChip>
            <T n="view2d" t="二维" ml={1} />
            <CaretBox>
              <Caret $ml={0} />
            </CaretBox>
          </ViewChip>
          <T n="topview" t="俯视" ml={4} />
          <Caret $ml={8} />
          <T n="orbit" t="动态观察" />
          <T n="local3d" t="局部三维" />
        </TopBar>
        <Body>
          <NavCol>
            <PanelHead title="快导航栏" />
            <NavButton>工程设置</NavButton>
            <NavButton $raised>绘图输入</NavButton>
            <ExpandRow>
              <svg width="9" height="9" viewBox="0 0 9 9">
                <path d="M3 0h3v3h3v3H6v3H3V6H0V3h3z" fill="#0f7a7a" />
              </svg>
              <svg width="16" height="11" viewBox="0 0 16 11">
                <path d="M0 0h9v2H0zM7 7h9v2H7z" fill="#0f6a6a" />
              </svg>
            </ExpandRow>
            <TreeBox>
              <GroupRow>
                <Twist $open />
                <Icon n="folderOpen" />
                常用构件类型
              </GroupRow>
              {commonKids.map(([n, t], i) => (
                <ChildRow key={t} $last={i === commonKids.length - 1}>
                  <Icon n={n} size={15} />
                  <ChildLabel>{mix(t)}</ChildLabel>
                </ChildRow>
              ))}
              {groups.map(g => (
                <GroupRow key={g}>
                  <Twist />
                  <Icon n="folder" />
                  {g}
                </GroupRow>
              ))}
              <GroupRow>
                <Twist $open />
                <Icon n="folderOpen" />
                {mix('CAD识别')}
                <Icon n="listBlue" size={14} />
                <NewBadge>NEW</NewBadge>
              </GroupRow>
              {cadKids.map(([n, t]) => (
                <ChildRow key={t}>
                  <Icon n={n} size={15} />
                  <ChildLabel $sel={t === '识别梁'}>{mix(t)}</ChildLabel>
                </ChildRow>
              ))}
            </TreeBox>
          </NavCol>

          <MidCol>
            <ListPanel>
              <PanelHead title="构件列表" />
              <ListBar>
                <T n="plusNew" t="新建" ml={0} />
                <Caret $ml={3} />
                <T n="xGray" ml={9} />
                <T n="paste" ml={11} />
              </ListBar>
              <SearchBox>
                <SearchText>搜索构件...</SearchText>
                <SearchBtn>
                  <Icon n="search" />
                </SearchBtn>
              </SearchBox>
              <ListTree>
                <Dots />
                <Icon n="findBeam" />
                识别梁
              </ListTree>
            </ListPanel>

            <DrawPanel>
              <PanelHead title="图纸管理" />
              <Tabs>
                <Tab $on>图纸文件列表</Tab>
                <Tab>图纸楼层对照表</Tab>
              </Tabs>
              <TabBody>
                <BtnRow>
                  <GrayBtn $w={57}>添加图纸</GrayBtn>
                  <GrayBtn $w={12}>
                    <Caret $ml={0} />
                  </GrayBtn>
                  <GrayBtn $w={57}>整理图纸</GrayBtn>
                  <GrayBtn $w={57}>定位图纸</GrayBtn>
                  <GrayBtn $w={57}>手动分割</GrayBtn>
                  <GrayBtn $w={57}>删除图纸</GrayBtn>
                </BtnRow>
                <GridWrap>
                  <Sheet>
                    <SheetRow $h={25}>
                      <HeadCell />
                      <NameHead>图纸名称</NameHead>
                      <RatioHead>图纸比例</RatioHead>
                    </SheetRow>
                    {rows.map(([no, name]) => {
                      const sel = no === 10;
                      const plain = no === 12;
                      const bg = plain ? '#fff' : sel ? '#ffff66' : '#ffff00';
                      return (
                        <SheetRow key={no}>
                          <HeadCell $sel={sel}>{no}</HeadCell>
                          <NameCell $bg={bg} $pad={sel ? 3 : plain ? 20 : 31}>
                            {!sel && !plain && <Guide $last={no === 11} />}
                            {sel && <SelFrame />}
                            <CellText>{mix(name)}</CellText>
                          </NameCell>
                          <RatioCell $bg={plain ? '#fff' : '#ffff00'}>
                            <Latin>1:1</Latin>
                          </RatioCell>
                        </SheetRow>
                      );
                    })}
                  </Sheet>
                  <ScrollBar>
                    <ScrollArrow />
                    <Thumb />
                    <ScrollArrow $down />
                  </ScrollBar>
                </GridWrap>
              </TabBody>
            </DrawPanel>

            <LayerPanel>
              <PanelHead title="CAD图层显示" />
              <LayerTree>
                <LayerRow>
                  <Arrow />
                  <Check />
                  {mix('已提取的CAD图层')}
                </LayerRow>
                <LayerRow>
                  <Arrow />
                  <Check $on>✓</Check>
                  {mix('CAD原始图层')}
                </LayerRow>
              </LayerTree>
            </LayerPanel>
          </MidCol>

          <RightCol>
            <Bars>
              <BarRow $h={26}>
                <Strip>
                  <Handle />
                  <T n="brush" t="删除" ml={2} />
                  <Sep />
                  <T n="copy" t="复制" />
                  <T n="mirror" t="镜像" />
                  <Sep />
                  <T n="move" t="移动" />
                  <T n="rotate" t="旋转" />
                  <Sep />
                  <T n="extend" t="延伸" />
                  <T n="trim" t="修剪" />
                  <Sep />
                  <T n="breakp" t="打断" />
                  <T n="merge" t="合并" />
                  <T n="split" t="分割" off />
                </Strip>
              </BarRow>
              <BarRow $h={29}>
                <Strip>
                  <Handle />
                  <Combo $w={56} $ml={0}>
                    <ComboText>第5层</ComboText>
                    <ComboBtn>
                      <Caret $ml={0} />
                    </ComboBtn>
                  </Combo>
                  <Combo $w={71}>
                    <ComboText>CAD识别</ComboText>
                    <ComboBtn>
                      <Caret $ml={0} />
                    </ComboBtn>
                  </Combo>
                  <Combo $w={69} $ml={2}>
                    <ComboText>识别梁</ComboText>
                    <ComboBtn>
                      <Caret $ml={0} />
                    </ComboBtn>
                  </Combo>
                  <Combo $w={69}>
                    <ComboText />
                    <ComboBtn>
                      <Caret $ml={0} />
                    </ComboBtn>
                  </Combo>
                  <Combo $w={72}>
                    <ComboText>分层1</ComboText>
                    <ComboBtn>
                      <Caret $ml={0} />
                    </ComboBtn>
                  </Combo>
                  <Sep $ml={3} $mr={0} />
                  <HiTool $ml={1}>
                    <Icon n="attr" />
                    属性
                  </HiTool>
                  <T n="pencil" t="编辑钢筋" ml={4} />
                  <HiTool $ml={3}>
                    <Icon n="list" />
                    构件列
                  </HiTool>
                </Strip>
              </BarRow>
              <BarRow>
                <Strip $w={348}>
                  <Handle />
                  <T n="cursor" t="选择" ml={2} />
                  <Caret $ml={6} />
                  <Sep $ml={8} />
                  <T n="span" t="原位标注" ml={8} off />
                  <Caret $ml={7} $off />
                  <T n="span" t="重提梁跨" ml={8} off />
                  <Caret $ml={7} $off />
                  <T n="apply" t="应用到同名梁" ml={8} off />
                </Strip>
                <Strip $w={30} $ml={60}>
                  <Handle />
                </Strip>
              </BarRow>
              <BarRow>
                <Strip>
                  <Handle />
                  <T n="locate" t="定位CAD图" ml={2} />
                  <T n="clearCad" t="清除CAD图" ml={4} />
                  <T n="scale" t="设置比例" ml={9} />
                  <T n="replace" t="批量替换" />
                  <T n="restore" t="还原CAD图元" />
                  <T n="patch" t="补画CAD线" ml={9} />
                  <Sep />
                  <T n="cad" />
                </Strip>
              </BarRow>
              <BarRow>
                <Strip $w={168}>
                  <Handle />
                  <T n="phiA" t="转换符号" ml={2} />
                  <T n="liang" t="识别连梁表" />
                </Strip>
                <Strip $ml={0}>
                  <Handle />
                  <HiTool $ml={0}>
                    <Icon n="edgeLine" />
                    提取梁边线
                  </HiTool>
                  <T n="markLine" t="提取梁标注" ml={3} />
                  <Caret />
                  <T n="findBeam" t="识别梁" ml={6} />
                  <Caret />
                  <T n="support" t="查改支座" ml={6} />
                  <Caret />
                  <T n="report" t="识" ml={6} />
                </Strip>
              </BarRow>
              <BarRow>
                <Strip>
                  <Handle $ml={1} />
                  <HiTool $ml={1}>
                    <Icon n="layers" />
                    图层设置
                  </HiTool>
                  <Sep $ml={3} $mr={-3} />
                  <T n="cadShow" t="显示指定图层" />
                  <T n="cadHide" t="隐藏指定图层" />
                  <Sep />
                  <T n="cadPick" t="选择同图层CAD图元" />
                  <T n="cadPick2" t="选择同颜色CAD图" />
                </Strip>
              </BarRow>
            </Bars>
            <Canvas>
              <Cad />
              <Dialog>
                <DialogTitle>图线选择方式</DialogTitle>
                <DialogBody>
                  <RadioRow>
                    <Radio />
                    快捷键选择（原有方式）
                  </RadioRow>
                  <RadioRow>
                    <Radio $on />
                    按图层选择
                  </RadioRow>
                  <RadioRow>
                    <Radio />
                    按颜色选择
                  </RadioRow>
                </DialogBody>
              </Dialog>
            </Canvas>
          </RightCol>
        </Body>
      </Shell>
    </>
  );
}
